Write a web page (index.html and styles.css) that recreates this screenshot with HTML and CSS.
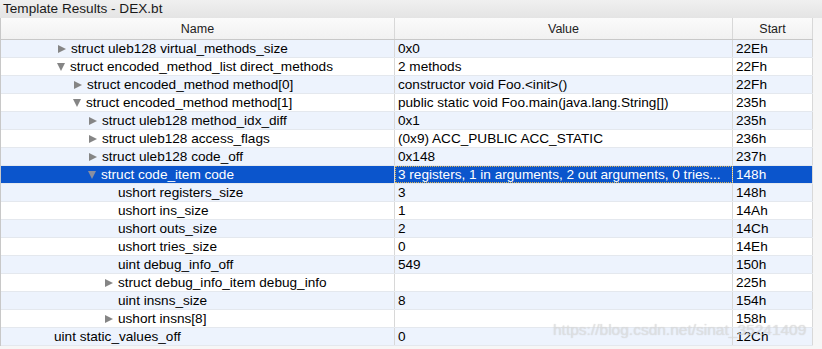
FILE: index.html
```html
<!DOCTYPE html>
<html lang="en">
<head>
    <meta charset="UTF-8">
    <title>Template Results - DEX.bt</title>
    <link rel="stylesheet" href="styles.css">
</head>
<body>

<div class="panel">
    <div class="title">Template Results - DEX.bt</div>

    <div class="table">
        <div class="row head">
            <div class="cell">Name</div>
            <div class="cell">Value</div>
            <div class="cell">Start</div>
        </div>

        <div class="row odd">
            <div class="cell name l1"><span class="tri closed"></span>struct uleb128 virtual_methods_size</div>
            <div class="cell">0x0</div>
            <div class="cell">22Eh</div>
        </div>
        <div class="row">
            <div class="cell name l1"><span class="tri open"></span>struct encoded_method_list direct_methods</div>
            <div class="cell">2 methods</div>
            <div class="cell">22Fh</div>
        </div>
        <div class="row odd">
            <div class="cell name l2"><span class="tri closed"></span>struct encoded_method method[0]</div>
            <div class="cell">constructor void Foo.&lt;init&gt;()</div>
            <div class="cell">22Fh</div>
        </div>
        <div class="row">
            <div class="cell name l2"><span class="tri open"></span>struct encoded_method method[1]</div>
            <div class="cell">public static void Foo.main(java.lang.String[])</div>
            <div class="cell">235h</div>
        </div>
        <div class="row odd">
            <div class="cell name l3"><span class="tri closed"></span>struct uleb128 method_idx_diff</div>
            <div class="cell">0x1</div>
            <div class="cell">235h</div>
        </div>
        <div class="row">
            <div class="cell name l3"><span class="tri closed"></span>struct uleb128 access_flags</div>
            <div class="cell">(0x9) ACC_PUBLIC ACC_STATIC</div>
            <div class="cell">236h</div>
        </div>
        <div class="row odd">
            <div class="cell name l3"><span class="tri closed"></span>struct uleb128 code_off</div>
            <div class="cell">0x148</div>
            <div class="cell">237h</div>
        </div>
        <div class="row selected">
            <div class="cell name l3"><span class="tri open"></span>struct code_item code</div>
            <div class="cell focus">3 registers, 1 in arguments, 2 out arguments, 0 tries...</div>
            <div class="cell">148h</div>
        </div>
        <div class="row odd">
            <div class="cell name l4">ushort registers_size</div>
            <div class="cell">3</div>
            <div class="cell">148h</div>
        </div>
        <div class="row">
            <div class="cell name l4">ushort ins_size</div>
            <div class="cell">1</div>
            <div class="cell">14Ah</div>
        </div>
        <div class="row odd">
            <div class="cell name l4">ushort outs_size</div>
            <div class="cell">2</div>
            <div class="cell">14Ch</div>
        </div>
        <div class="row">
            <div class="cell name l4">ushort tries_size</div>
            <div class="cell">0</div>
            <div class="cell">14Eh</div>
        </div>
        <div class="row odd">
            <div class="cell name l4">uint debug_info_off</div>
            <div class="cell">549</div>
            <div class="cell">150h</div>
        </div>
        <div class="row">
            <div class="cell name l4"><span class="tri closed"></span>struct debug_info_item debug_info</div>
            <div class="cell"></div>
            <div class="cell">225h</div>
        </div>
        <div class="row odd">
            <div class="cell name l4">uint insns_size</div>
            <div class="cell">8</div>
            <div class="cell">154h</div>
        </div>
        <div class="row">
            <div class="cell name l4"><span class="tri closed"></span>ushort insns[8]</div>
            <div class="cell"></div>
            <div class="cell">158h</div>
        </div>
        <div class="row odd">
            <div class="cell name l0">uint static_values_off</div>
            <div class="cell">0</div>
            <div class="cell">12Ch</div>
        </div>
    </div>

    <div class="watermark">https://blog.csdn.net/sinat_35241409</div>
</div>

</body>
</html>
```

FILE: styles.css
```css
body {
    margin: 0;
    background: #f6f6f6;
    font-family: "Liberation Sans", Arial, sans-serif;
    font-size: 13.6px;
    color: #000;
}
.panel {
    position: relative;
    width: 822px;
    height: 349px;
    overflow: hidden;
    background: #f6f6f6;
}
.title {
    height: 18px;
    line-height: 17px;
    padding-left: 3px;
    background: linear-gradient(#f0f0f0, #e4e4e4);
    color: #1a1a1a;
}
.table {
    width: 813px;
    background: #fff;
    border-left: 1px solid #c8c8c8;
    box-sizing: border-box;
}
.row {
    display: grid;
    grid-template-columns: 394px 338px 80px;
    height: 18px;
    line-height: 18px;
    background: #fff;
    border-bottom: 1px solid #e4e8ee;
    box-sizing: border-box;
}
.row.odd {
    background: #edf3fd;
}
.cell {
    padding-left: 3px;
    border-right: 1px solid #d8d8d8;
    white-space: nowrap;
    overflow: hidden;
}
.head {
    height: 22px;
    line-height: 22px;
    background: linear-gradient(#fbfbfb, #f1f1f1);
    border-bottom: 1px solid #c8c8c8;
    font-size: 12.5px;
    color: #222;
}
.head .cell {
    text-align: center;
    padding-left: 0;
}
.row.selected {
    background: #0b55cc;
    color: #fff;
}
.focus {
    outline: 1px dotted #d8b456;
    outline-offset: -1px;
}
.name {
    display: flex;
    align-items: center;
    padding-left: 0;
}
.l0 { padding-left: 53px; }
.l1 { padding-left: 70px; }
.l2 { padding-left: 86px; }
.l3 { padding-left: 101px; }
.l4 { padding-left: 117px; }
.tri {
    width: 0;
    height: 0;
    margin-left: -13px;
    margin-right: 5px;
}
.tri.closed {
    border-top: 4px solid transparent;
    border-bottom: 4px solid transparent;
    border-left: 8px solid #858585;
}
.tri.open {
    margin-left: -14px;
    margin-right: 5px;
    border-left: 4.5px solid transparent;
    border-right: 4.5px solid transparent;
    border-top: 8px solid #858585;
}
.selected .tri.open {
    border-top-color: #8a8fa0;
}
.watermark {
    position: absolute;
    left: 553px;
    top: 321px;
    font-size: 15.5px;
    color: rgba(228, 228, 228, 0.7);
    text-shadow: 0 0 1px rgba(120, 120, 120, 0.3);
    white-space: nowrap;
}
```
